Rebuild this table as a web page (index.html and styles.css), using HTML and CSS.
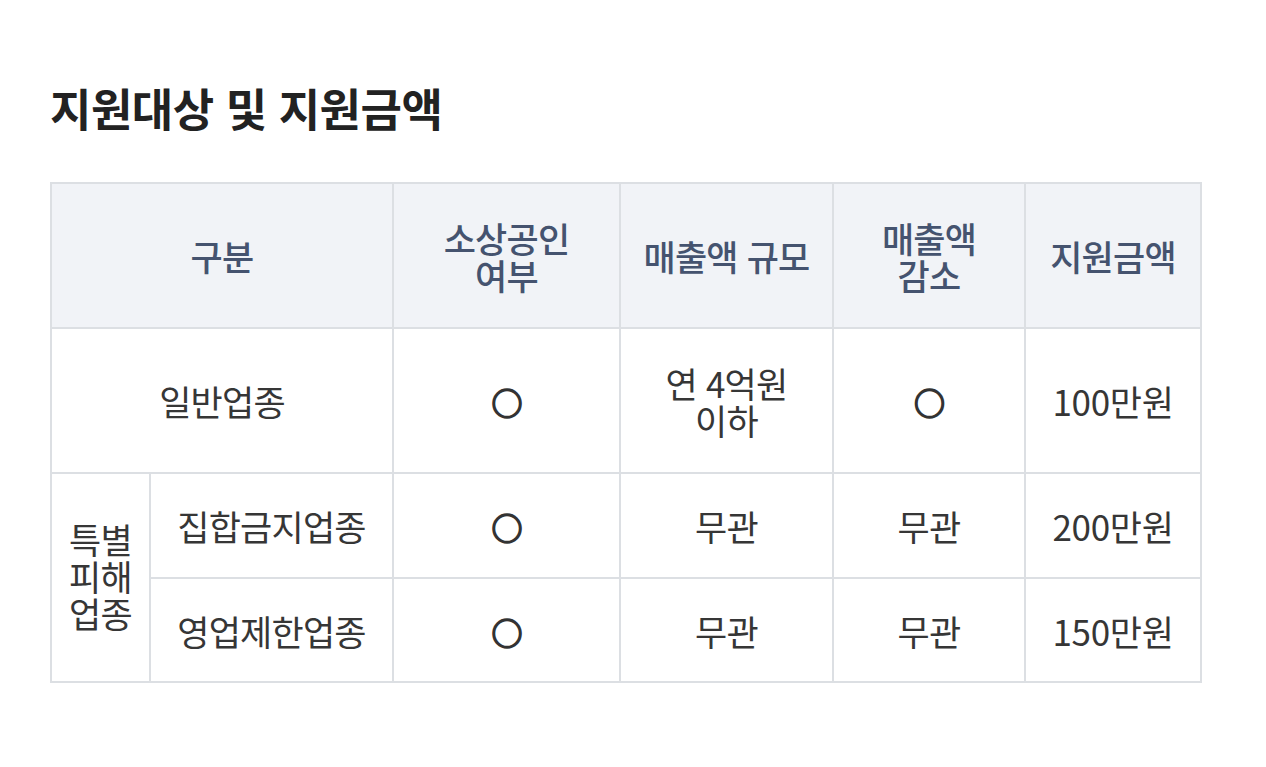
FILE: index.html
```html
<!DOCTYPE html>
<html lang="ko">
<head>
<meta charset="utf-8">
<link rel="stylesheet" href="styles.css">
</head>
<body>
<main class="page">
  <h1 class="title">지원대상 및 지원금액</h1>
  <table class="grid">
    <colgroup>
      <col class="c-a"><col class="c-b"><col class="c-c"><col class="c-d"><col class="c-e"><col class="c-f">
    </colgroup>
    <thead>
      <tr class="r-head">
        <th colspan="2">구분</th>
        <th>소상공인<br>여부</th>
        <th>매출액 규모</th>
        <th>매출액<br>감소</th>
        <th>지원금액</th>
      </tr>
    </thead>
    <tbody>
      <tr class="r-1">
        <td colspan="2">일반업종</td>
        <td><span class="mark">○</span></td>
        <td>연 4억원<br>이하</td>
        <td><span class="mark">○</span></td>
        <td class="money">100만원</td>
      </tr>
      <tr class="r-2">
        <td rowspan="2" class="group">특별<br>피해<br>업종</td>
        <td>집합금지업종</td>
        <td><span class="mark">○</span></td>
        <td>무관</td>
        <td>무관</td>
        <td class="money">200만원</td>
      </tr>
      <tr class="r-3">
        <td>영업제한업종</td>
        <td><span class="mark">○</span></td>
        <td>무관</td>
        <td>무관</td>
        <td class="money">150만원</td>
      </tr>
    </tbody>
  </table>
</main>
</body>
</html>
```

FILE: styles.css
```css
html, body {
  margin: 0;
  padding: 0;
  background: #ffffff;
}
body {
  font-family: "Noto Sans CJK KR", "Noto Sans", sans-serif;
  color: #333333;
}
.page {
  padding: 78px 0 0 50px;
}
.title {
  margin: 0 0 44px 0;
  font-size: 45px;
  line-height: 60px;
  font-weight: 700;
  color: #222222;
  letter-spacing: -0.5px;
}
.grid {
  border-collapse: collapse;
  border: 2px solid #dcdfe3;
  table-layout: fixed;
  width: 1150px;
}
.c-a { width: 99px; }
.c-b { width: 243px; }
.c-c { width: 227px; }
.c-d { width: 213px; }
.c-e { width: 192px; }
.c-f { width: 176px; }
.grid th, .grid td {
  border: 2px solid #dcdfe3;
  text-align: center;
  vertical-align: middle;
  padding: 0;
  font-size: 35px;
  line-height: 37px;
  letter-spacing: -0.8px;
}
.grid th {
  background: #f1f3f7;
  color: #45536f;
  font-weight: 500;
}
.grid td {
  color: #363636;
  font-weight: 400;
}
.grid td.money {
  letter-spacing: -0.3px;
}
.r-head { height: 145px; }
.r-1 { height: 145px; }
.r-2 { height: 105px; }
.r-3 { height: 104px; }
.grid td.group {
  line-height: 37px;
  padding-bottom: 4px;
}
.mark {
  font-size: 31px;
  font-weight: 700;
  color: #333333;
  -webkit-text-stroke: 1.6px #333333;
}
```
